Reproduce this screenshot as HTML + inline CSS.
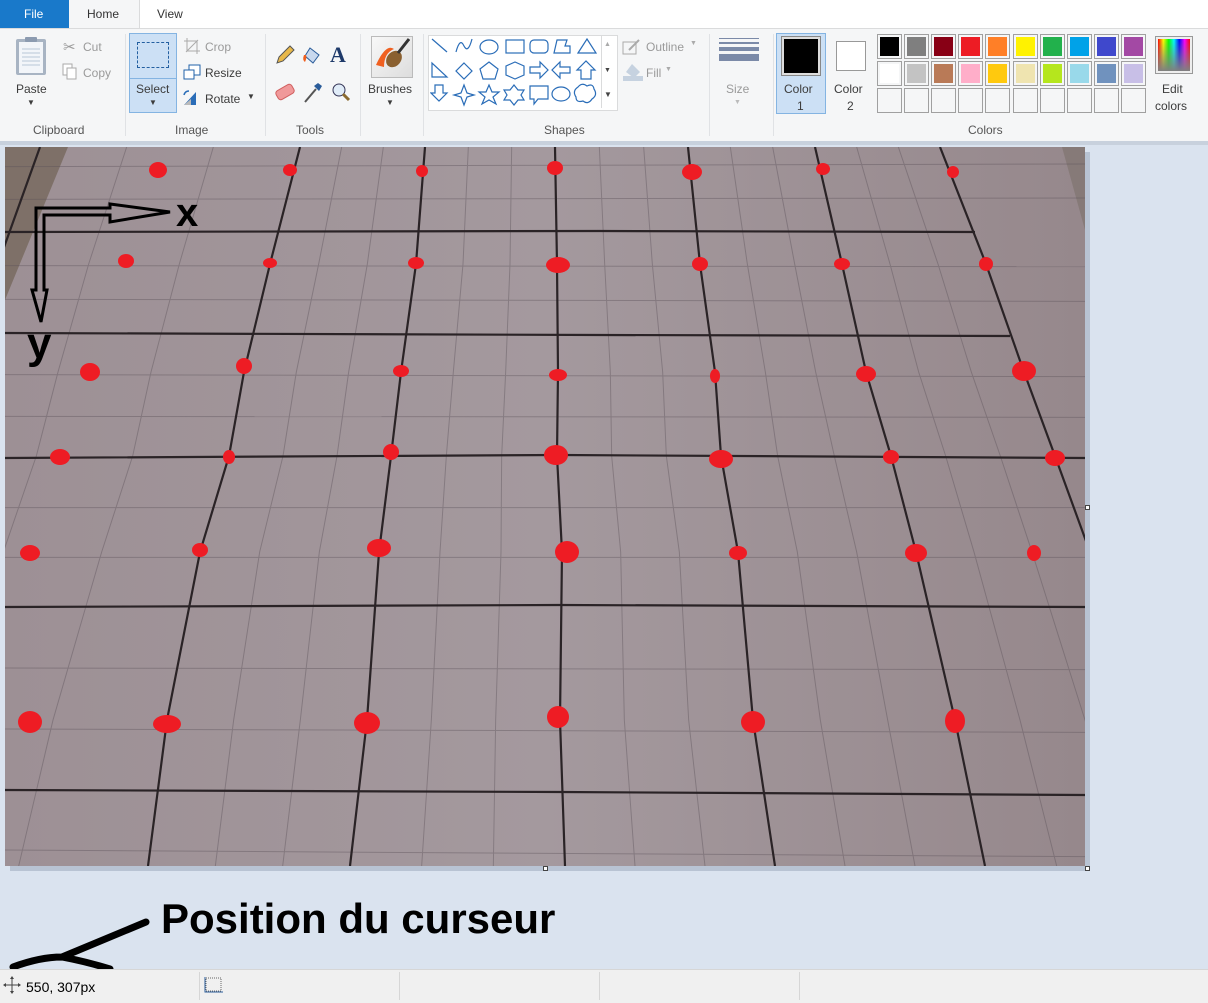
<!DOCTYPE html>
<html><head><meta charset="utf-8"><style>
body{margin:0;width:1208px;height:1002px;overflow:hidden;background:#dae3ef;font-family:"Liberation Sans",sans-serif;font-size:12px;color:#3c3c3c;position:relative}
.a{position:absolute}
.t{position:absolute;white-space:nowrap}
.g{color:#9a9a9a}
.sep{position:absolute;top:34px;width:1px;height:102px;background:#e0e2e5}
.lbl{position:absolute;top:123px;font-size:12px;color:#555}
.sw{position:absolute;width:25px;height:25px;border:1px solid #a0a0a0;box-sizing:border-box;padding:2px;background:#f5f6f7}
.sw i{display:block;width:100%;height:100%}
</style></head><body>
<div class="a" style="left:0;top:0;width:1208px;height:28px;background:#fff"></div>
<div class="a" style="left:0;top:0;width:69px;height:28px;background:#1979ca"></div>
<div class="t" style="left:24px;top:7px;color:#fff">File</div>
<div class="a" style="left:69px;top:0;width:70px;height:29px;background:#f5f6f7;border-right:1px solid #dadbdc"></div>
<div class="t" style="left:87px;top:7px;color:#333">Home</div>
<div class="t" style="left:157px;top:7px;color:#333">View</div>
<div class="a" style="left:0;top:28px;width:1208px;height:112px;background:#f5f6f7;border-top:1px solid #dadbdc;border-bottom:1px solid #dadbdc"></div>
<div class="a" style="left:0;top:141px;width:1208px;height:4px;background:#c8d1dd"></div>
<svg class="a" style="left:14px;top:36px" width="36" height="40"><rect x="2" y="3" width="30" height="36" rx="2" fill="#a8b4c3"/><rect x="5" y="6" width="24" height="31" fill="#f2f5f9"/><g stroke="#b8c6d8"><line x1="8" y1="13" x2="26" y2="13"/><line x1="8" y1="17" x2="26" y2="17"/><line x1="8" y1="21" x2="26" y2="21"/><line x1="8" y1="25" x2="26" y2="25"/><line x1="8" y1="29" x2="26" y2="29"/></g><rect x="11" y="1" width="12" height="5" rx="1" fill="#8c9bb0"/></svg>
<div class="t" style="left:16px;top:82px">Paste</div>
<div class="t" style="left:27px;top:98px;font-size:8px">▼</div>
<div class="t g" style="left:63px;top:38px;font-size:15px">✂</div><div class="t g" style="left:83px;top:40px">Cut</div>
<svg class="a" style="left:62px;top:63px" width="16" height="18"><rect x="1" y="1" width="9" height="11" fill="#fff" stroke="#aaa"/><rect x="5" y="5" width="9" height="11" fill="#fff" stroke="#aaa"/></svg><div class="t g" style="left:83px;top:66px">Copy</div>
<div class="lbl" style="left:33px">Clipboard</div>
<div class="sep" style="left:125px"></div>
<div class="a" style="left:129px;top:33px;width:48px;height:80px;background:#cce0f5;border:1px solid #84b4e2;box-sizing:border-box"></div>
<div class="a" style="left:129px;top:78px;width:48px;height:1px;background:#84b4e2"></div>
<div class="a" style="left:137px;top:42px;width:32px;height:26px;border:1px dashed #235fa0;box-sizing:border-box"></div>
<div class="t" style="left:136px;top:82px">Select</div>
<div class="t" style="left:149px;top:98px;font-size:8px">▼</div>
<svg class="a" style="left:183px;top:37px" width="18" height="18"><path d="M4 1v13h13M1 4h13v13M3 15L15 3" stroke="#aaa" fill="none"/></svg><div class="t g" style="left:205px;top:40px">Crop</div>
<svg class="a" style="left:183px;top:63px" width="18" height="18"><rect x="6" y="2" width="11" height="10" fill="#fff" stroke="#2162a9"/><rect x="1" y="7" width="10" height="9" fill="#fff" stroke="#2162a9"/></svg><div class="t" style="left:205px;top:66px">Resize</div>
<svg class="a" style="left:182px;top:89px" width="20" height="18"><path d="M2 16L14 16L14 3Z" fill="#2a6db8"/><path d="M2 16L9 16L9 10Z" fill="#bbb"/><path d="M2 6Q3 2 7 2" stroke="#2a6db8" fill="none" stroke-width="1.5"/></svg><div class="t" style="left:205px;top:92px">Rotate</div><div class="t" style="left:247px;top:92px;font-size:8px">▼</div>
<div class="lbl" style="left:175px">Image</div>
<div class="sep" style="left:265px"></div>
<svg class="a" style="left:274px;top:44px" width="22" height="22"><path d="M3 19L5 13L16 2L20 6L9 17Z" fill="#e8b84a" stroke="#555"/></svg>
<svg class="a" style="left:302px;top:44px" width="22" height="22"><path d="M8 4L17 11L11 19L3 12Z" fill="#c8d8ee" stroke="#2a5c9a"/><path d="M2 11Q0 16 3 18Q5 14 4 11Z" fill="#f06020"/></svg>
<div class="t" style="left:330px;top:42px;font-size:22px;font-weight:bold;font-family:'Liberation Serif',serif;color:#1e3a6a">A</div>
<svg class="a" style="left:273px;top:81px" width="26" height="22"><rect x="3" y="6" width="18" height="10" rx="3" transform="rotate(-30 12 11)" fill="#f0999a" stroke="#d06060"/></svg>
<svg class="a" style="left:302px;top:81px" width="22" height="24"><path d="M3 21L14 8" stroke="#555" stroke-width="2"/><path d="M12 5L17 10L20 5L16 2Z" fill="#2a5c9a"/></svg>
<svg class="a" style="left:330px;top:81px" width="22" height="22"><circle cx="9" cy="9" r="6" fill="#e0ecf8" stroke="#335"/><path d="M13 13L19 19" stroke="#8a6a30" stroke-width="3"/></svg>
<div class="lbl" style="left:296px">Tools</div>
<div class="sep" style="left:360px"></div>
<div class="a" style="left:371px;top:36px;width:40px;height:40px;border:1px solid #bbb;background:linear-gradient(135deg,#f8f8f8,#ddd)"></div>
<svg class="a" style="left:372px;top:37px" width="38" height="38"><path d="M4 28Q14 6 22 12Q12 16 12 30Z" fill="#f06020"/><ellipse cx="22" cy="22" rx="7" ry="9" transform="rotate(40 22 22)" fill="#8a6030"/><path d="M26 16L37 2" stroke="#333" stroke-width="3"/></svg>
<div class="t" style="left:368px;top:82px">Brushes</div>
<div class="t" style="left:386px;top:98px;font-size:8px">▼</div>
<div class="sep" style="left:423px"></div>
<div class="a" style="left:428px;top:35px;width:188px;height:74px;background:#fff;border:1px solid #dadbdc"></div>
<svg class="a" style="left:430px;top:37px" width="170" height="72" fill="none" stroke="#2a6db8" stroke-width="1.2">
<path d="M2 2L17 15"/><path d="M26 15Q30 0 34 9Q38 17 42 2"/><ellipse cx="59" cy="10" rx="9" ry="7"/><rect x="76" y="3" width="18" height="13"/><rect x="100" y="3" width="18" height="13" rx="4"/><path d="M124 16L127 3L137 3L135 9L140 9L140 16Z"/><path d="M148 16L157 2L166 16Z"/>
<path d="M2 40L2 26L17 40Z"/><path d="M34 26L42 34L34 42L26 34Z"/><path d="M59 25L68 32L65 42L53 42L50 32Z"/><path d="M76 29L85 25L94 29L94 38L85 42L76 38Z"/><path d="M100 30L110 30L110 25L118 33L110 41L110 36L100 36Z"/><path d="M140 30L130 30L130 25L122 33L130 41L130 36L140 36Z"/><path d="M151 42L151 33L147 33L156 24L165 33L161 33L161 42Z"/>
<path d="M5 48L13 48L13 56L17 56L9 64L1 56L5 56Z"/><path d="M34 48L37 56L44 58L37 60L34 68L31 60L24 58L31 56Z"/><path d="M59 48L62 55L69 55L63 60L66 67L59 63L52 67L55 60L49 55L56 55Z"/><path d="M84 48L88 53L94 53L91 58L94 63L88 63L84 68L80 63L74 63L77 58L74 53L80 53Z"/><path d="M100 49L118 49L118 62L108 62L104 67L104 62L100 62Z"/><ellipse cx="131" cy="57" rx="9" ry="7"/><path d="M148 50Q152 45 157 49Q163 46 164 52Q168 58 162 62Q158 68 153 64Q146 66 146 60Q142 54 148 50Z"/>
</svg>
<div class="a" style="left:601px;top:36px;width:14px;height:72px;border-left:1px solid #dadbdc"></div>
<div class="t" style="left:604px;top:41px;font-size:7px;color:#aaa">▲</div>
<div class="t" style="left:604px;top:67px;font-size:7px;color:#444">▼</div>
<div class="t" style="left:604px;top:90px;font-size:8px;color:#444">▼</div>
<svg class="a" style="left:622px;top:38px" width="20" height="18"><rect x="1" y="4" width="13" height="12" fill="none" stroke="#aaa"/><path d="M7 12L17 2" stroke="#aaa" stroke-width="2"/></svg><div class="t g" style="left:646px;top:40px">Outline</div><div class="t" style="left:690px;top:40px;font-size:7px;color:#aaa">▼</div>
<svg class="a" style="left:622px;top:62px" width="22" height="20"><path d="M10 2L18 10L12 16L4 10Z" fill="#c6d2e0"/><rect x="1" y="14" width="20" height="5" fill="#c6d2e0"/></svg><div class="t g" style="left:646px;top:66px">Fill</div><div class="t" style="left:665px;top:66px;font-size:7px;color:#aaa">▼</div>
<div class="lbl" style="left:544px">Shapes</div>
<div class="sep" style="left:709px"></div>
<div class="a" style="left:719px;top:38px;width:40px;height:1px;background:#7b8aa8"></div>
<div class="a" style="left:719px;top:42px;width:40px;height:2px;background:#7b8aa8"></div>
<div class="a" style="left:719px;top:47px;width:40px;height:4px;background:#7b8aa8"></div>
<div class="a" style="left:719px;top:54px;width:40px;height:7px;background:#7b8aa8"></div>
<div class="t g" style="left:726px;top:82px">Size</div>
<div class="t" style="left:734px;top:99px;font-size:7px;color:#bbb">▼</div>
<div class="sep" style="left:773px"></div>
<div class="a" style="left:776px;top:33px;width:50px;height:81px;background:#cce0f5;border:1px solid #84b4e2;box-sizing:border-box"></div>
<div class="a" style="left:781px;top:36px;width:40px;height:40px;border:1px solid #888;background:#ddd;box-sizing:border-box;padding:2px"><div style="width:100%;height:100%;background:#000"></div></div>
<div class="t" style="left:784px;top:82px">Color</div><div class="t" style="left:797px;top:99px">1</div>
<div class="a" style="left:836px;top:41px;width:30px;height:30px;border:1px solid #999;background:#fff;box-sizing:border-box"></div>
<div class="t" style="left:834px;top:82px">Color</div><div class="t" style="left:847px;top:99px">2</div>
<div id="pal"></div>
<div class="a" style="left:1155px;top:36px;width:38px;height:38px;border:1px solid #999;box-sizing:border-box;padding:2px;background:#eee"><div style="width:100%;height:100%;background:linear-gradient(to bottom,rgba(128,128,128,0),#808080),linear-gradient(to right,#f00,#ff0,#0f0,#0ff,#00f,#f0f,#f00)"></div></div>
<div class="t" style="left:1162px;top:82px">Edit</div><div class="t" style="left:1155px;top:99px">colors</div>
<div class="lbl" style="left:968px">Colors</div>

<div class="a" style="left:10px;top:152px;width:1080px;height:719px;background:#b8c3d3"></div>
<svg class="a" style="left:5px;top:147px" width="1080" height="719" viewBox="5 147 1080 719">
<defs><linearGradient id="bg" x1="0" y1="0" x2="1" y2="0"><stop offset="0" stop-color="#9d9095"/><stop offset=".5" stop-color="#a4999e"/><stop offset="1" stop-color="#96888c"/></linearGradient></defs>
<rect x="5" y="147" width="1080" height="719" fill="url(#bg)"/>
<path d="M5 147L68 147L5 300Z" fill="#7e7068"/>
<path d="M1062 147L1085 147L1085 230Z" fill="#867a78"/>
<g id="minor" stroke="#5a5058" stroke-width="1" fill="none" opacity=".4"></g>
<g id="major" stroke="#2a2326" stroke-width="2.2" fill="none"></g>
<g fill="#ee1c24" id="dots"></g>
<g fill="none" stroke="#000" stroke-width="3">
<path d="M36 208L36 290L32 290L41 322L47 290L44 290L44 215L110 215L110 222L170 212L110 204L110 208Z"/>
</g>
<text x="176" y="226" font-family="Liberation Sans" font-weight="bold" font-size="40" fill="#000">x</text>
<text x="27" y="358" font-family="Liberation Sans" font-weight="bold" font-size="44" fill="#000">y</text>
</svg>
<div class="a" style="left:1085px;top:505px;width:3px;height:3px;border:1px solid #444;background:#fff"></div>
<div class="a" style="left:543px;top:866px;width:3px;height:3px;border:1px solid #444;background:#fff"></div>
<div class="a" style="left:1085px;top:866px;width:3px;height:3px;border:1px solid #444;background:#fff"></div>

<div class="t" style="left:161px;top:895px;font-size:42px;font-weight:bold;color:#000">Position du curseur</div>
<svg class="a" style="left:0;top:910px" width="160" height="60"><path d="M13 57Q40 47 62 47Q88 52 110 59M62 47L146 12" stroke="#000" stroke-width="7" fill="none" stroke-linecap="round"/></svg>

<div class="a" style="left:0;top:969px;width:1208px;height:33px;background:#f0f0f0;border-top:1px solid #d6d6d6"></div>
<div class="a" style="left:199px;top:972px;width:1px;height:28px;background:#d6d6d6"></div>
<div class="a" style="left:399px;top:972px;width:1px;height:28px;background:#d6d6d6"></div>
<div class="a" style="left:599px;top:972px;width:1px;height:28px;background:#d6d6d6"></div>
<div class="a" style="left:799px;top:972px;width:1px;height:28px;background:#d6d6d6"></div>
<svg class="a" style="left:3px;top:976px" width="18" height="18"><path d="M9 1V17M1 9H17" stroke="#444"/><path d="M9 0L7 3H11ZM9 18L7 15H11ZM0 9L3 7V11ZM18 9L15 7V11Z" fill="#444"/></svg>
<div class="t" style="left:26px;top:979px;font-size:14px;color:#000">550, 307px</div>
<svg class="a" style="left:204px;top:976px" width="20" height="18"><rect x="2" y="2" width="15" height="13" fill="none" stroke="#666" stroke-dasharray="1 1"/><path d="M1 1V16H19" stroke="#2a5c9a" fill="none"/></svg>

<script>
var pal=[["#000","#7f7f7f","#880015","#ed1c24","#ff7f27","#fff200","#22b14c","#00a2e8","#3f48cc","#a349a4"],["#fff","#c3c3c3","#b97a57","#ffaec9","#ffc90e","#efe4b0","#b5e61d","#99d9ea","#7092be","#c8bfe7"],[0,0,0,0,0,0,0,0,0,0]];
var h="";for(var r=0;r<3;r++)for(var c=0;c<10;c++){h+='<div class="sw" style="left:'+(877+c*27.1)+'px;top:'+(34+r*27)+'px">'+(pal[r][c]?'<i style="background:'+pal[r][c]+'"></i>':'')+'</div>';}
document.getElementById('pal').innerHTML=h;
var NS="http://www.w3.org/2000/svg";
function P(g,pts,w){var e=document.createElementNS(NS,"polyline");e.setAttribute("points",pts.map(function(p){return p[0]+","+p[1]}).join(" "));if(w)e.setAttribute("stroke-width",w);document.getElementById(g).appendChild(e);}
var Y=[147,264,372,456,552,720,866];
var V=[[40,-2,-35,-60,-95,-175,-240],[300,270,244,229,200,167,148],[425,416,401,391,379,367,350],[555,557,558,557,562,560,565],[688,700,715,721,738,753,775],[815,842,866,891,916,955,985],[940,986,1024,1055,1090,1150,1200]];
for(var l=0;l<V.length;l++){P("major",Y.map(function(y,i){return[V[l][i],y]}));}
for(var l=0;l<V.length-1;l++)for(var k=1;k<3;k++){P("minor",Y.map(function(y,i){return[V[l][i]+(V[l+1][i]-V[l][i])*k/3,y]}));}
for(var k=1;k<3;k++){P("minor",Y.map(function(y,i){return[V[0][i]-(V[1][i]-V[0][i])*k/3,y]}));}
var H=[[[5,134],[1085,130]],[[5,232],[600,231],[975,232]],[[5,333],[600,335],[1010,336]],[[5,458],[560,455],[1085,458]],[[5,607],[560,605],[1085,607]],[[5,790],[560,792],[1085,795]],[[5,970],[1085,980]]];
H.forEach(function(h,i){if(i>0&&i<6)P("major",h);});
for(var i=0;i<H.length-1;i++)for(var k=1;k<3;k++){var a=H[i],b=H[i+1];var ya=a[0][1]+(b[0][1]-a[0][1])*k/3,yb=a[a.length-1][1]+(b[b.length-1][1]-a[a.length-1][1])*k/3;P("minor",[[5,ya],[1085,yb]]);}
var D=[[158,170,9,8],[290,170,7,6],[422,171,6,6],[555,168,8,7],[692,172,10,8],[823,169,7,6],[953,172,6,6],
[126,261,8,7],[270,263,7,5],[416,263,8,6],[558,265,12,8],[700,264,8,7],[842,264,8,6],[986,264,7,7],
[90,372,10,9],[244,366,8,8],[401,371,8,6],[558,375,9,6],[715,376,5,7],[866,374,10,8],[1024,371,12,10],
[60,457,10,8],[229,457,6,7],[391,452,8,8],[556,455,12,10],[721,459,12,9],[891,457,8,7],[1055,458,10,8],
[30,553,10,8],[200,550,8,7],[379,548,12,9],[567,552,12,11],[738,553,9,7],[916,553,11,9],[1034,553,7,8],
[30,722,12,11],[167,724,14,9],[367,723,13,11],[558,717,11,11],[753,722,12,11],[955,721,10,12]];
D.forEach(function(d){var e=document.createElementNS(NS,"ellipse");e.setAttribute("cx",d[0]);e.setAttribute("cy",d[1]);e.setAttribute("rx",d[2]);e.setAttribute("ry",d[3]);document.getElementById("dots").appendChild(e);});
</script>
</body></html>
